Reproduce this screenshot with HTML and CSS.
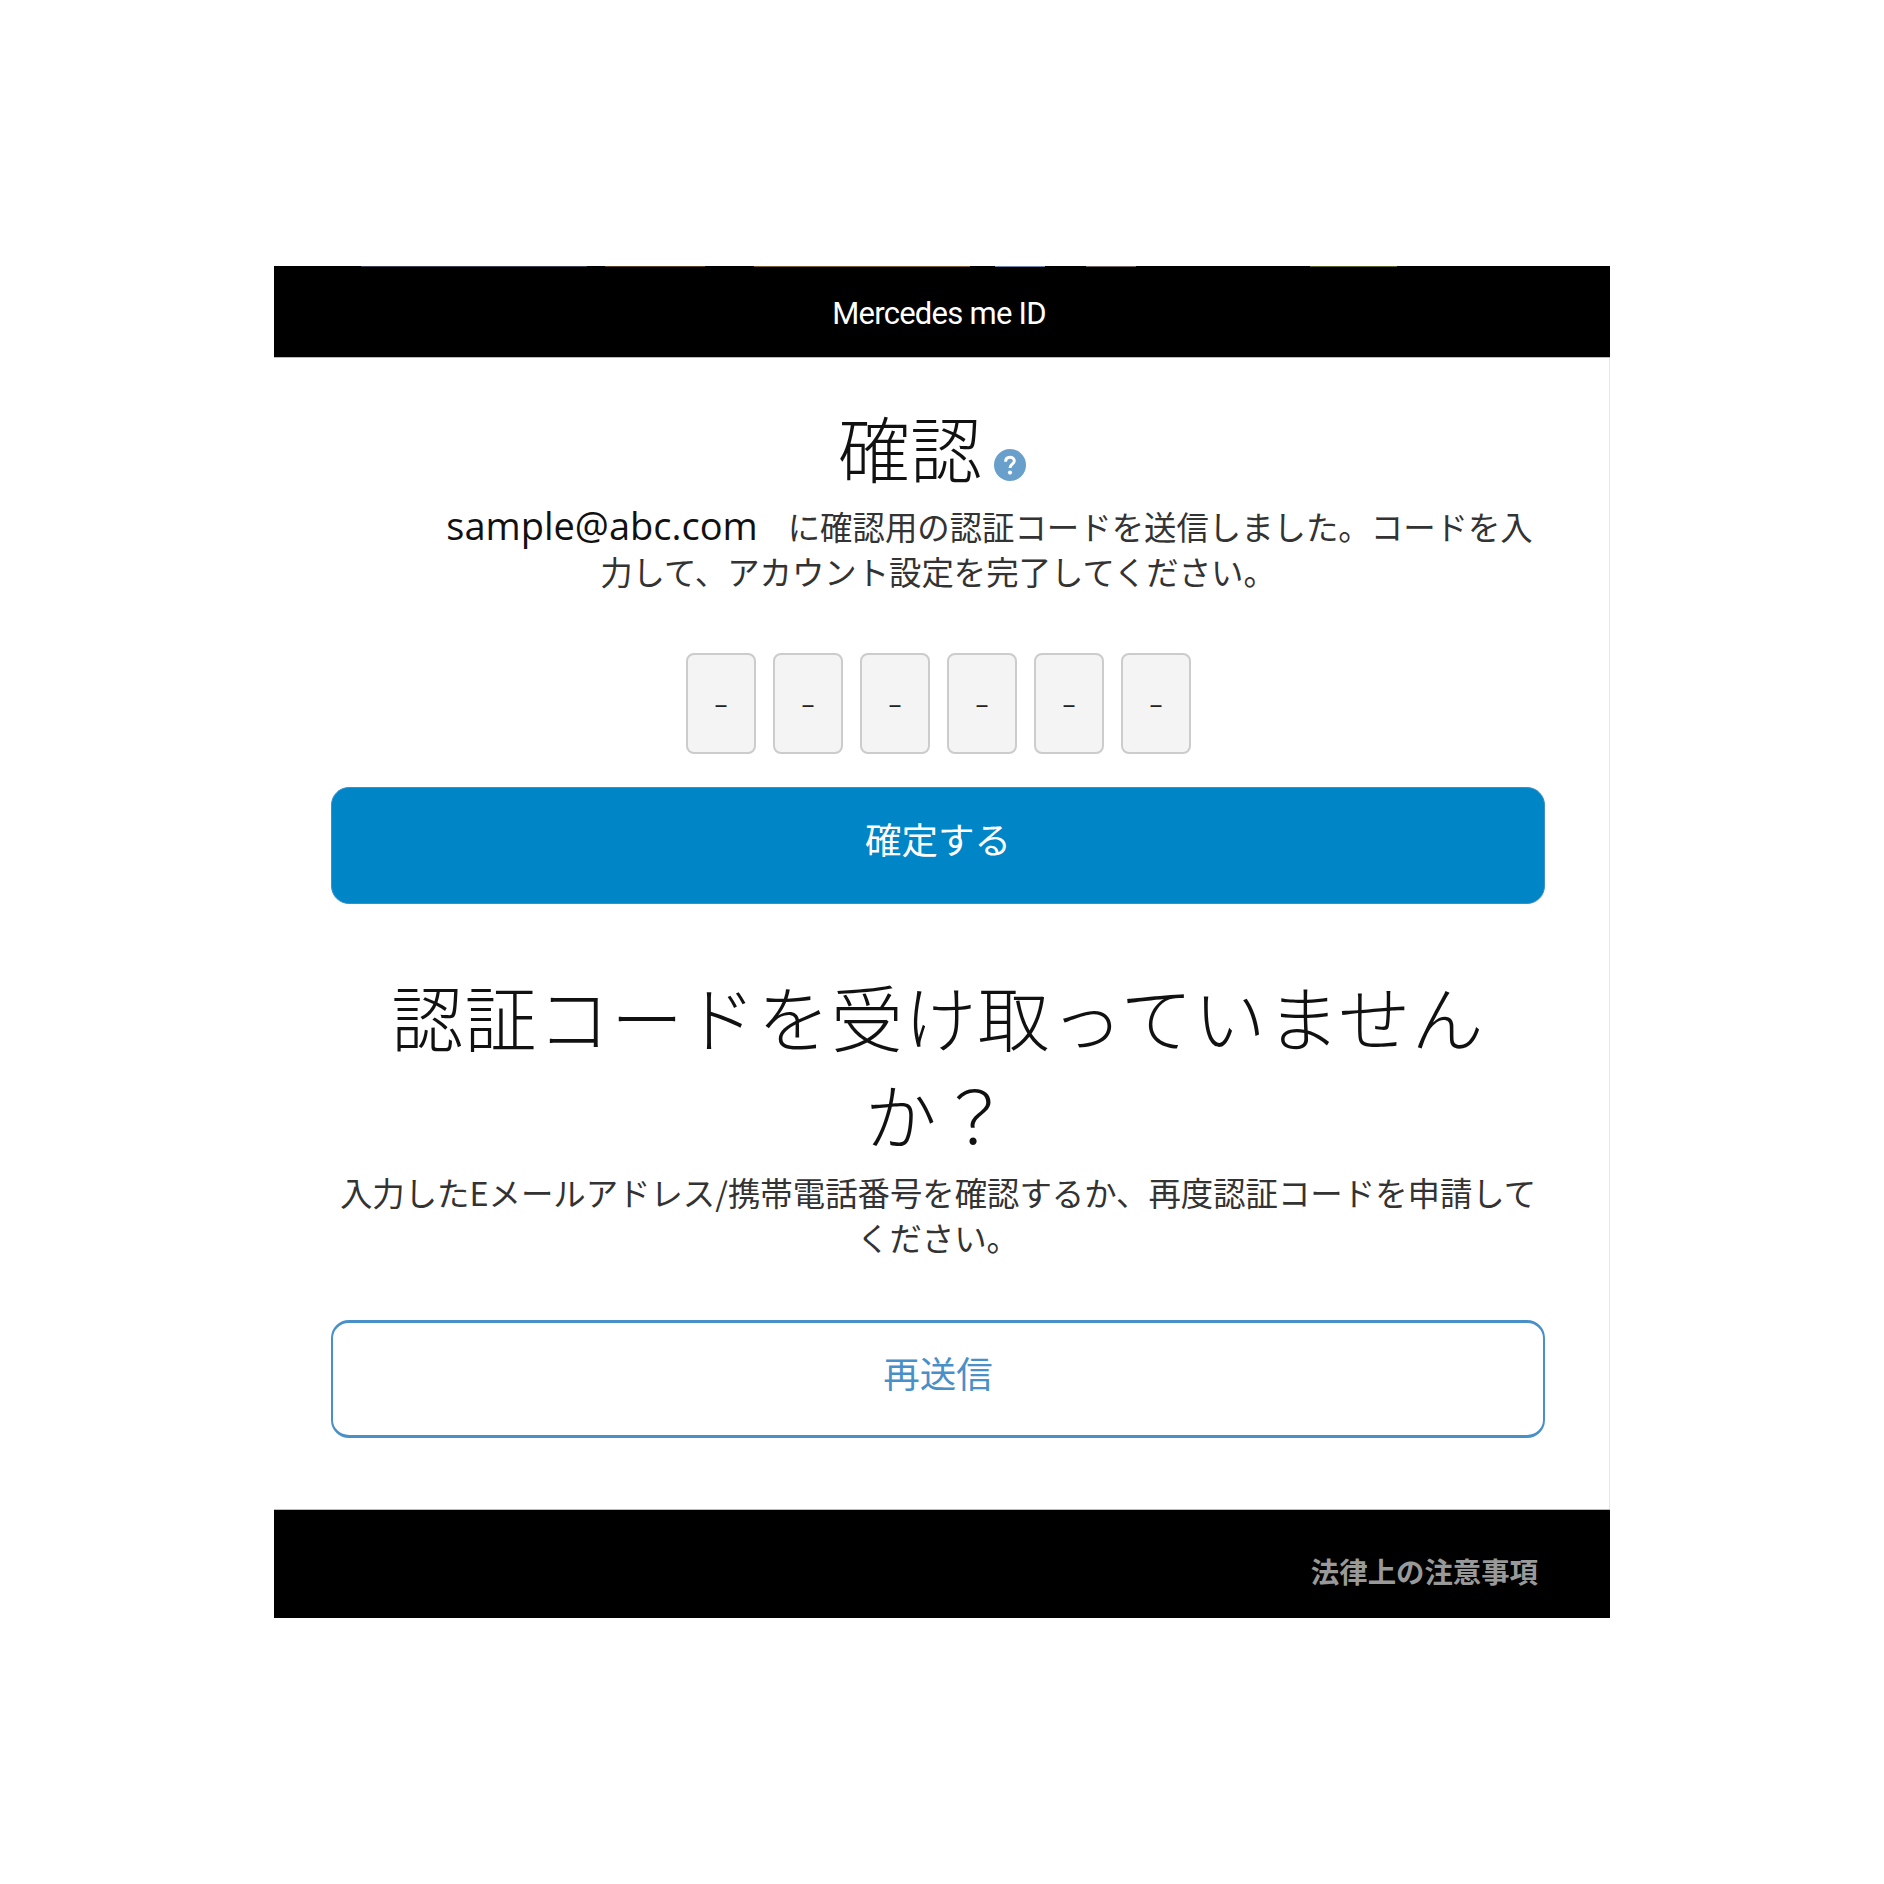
FILE: index.html
```html
<!DOCTYPE html>
<html lang="ja">
<head>
  <meta charset="UTF-8">
  <meta name="viewport" content="width=device-width, initial-scale=1.0">
  <title>Mercedes me ID</title>
  <link rel="stylesheet" href="styles.css">
</head>
<body>

<div class="page">
  <header class="top-bar">Mercedes me ID</header>

  <main class="content">
    <h1 class="title">確認<svg class="help-icon" viewBox="0 0 32 32" aria-hidden="true"><circle cx="16" cy="16" r="16" fill="#689fcb"/><path d="M11.6 12.8C11.6 10 13.4 8.3 16 8.3C18.6 8.3 20.3 9.9 20.3 12C20.3 15.2 16 15.2 16 19" fill="none" stroke="#fff" stroke-width="3"/><circle cx="16" cy="23.6" r="2.1" fill="#fff"/></svg></h1>
    <p class="message">
      <span class="line line-shift"><span class="email">sample@abc.com</span>に確認用の認証コードを送信しました。コードを入</span>
      <span class="line">力して、アカウント設定を完了してください。</span>
    </p>

    <div class="code-row">
      <div class="code-box">–</div>
      <div class="code-box">–</div>
      <div class="code-box">–</div>
      <div class="code-box">–</div>
      <div class="code-box">–</div>
      <div class="code-box">–</div>
    </div>

    <button type="button" class="btn btn-primary">確定する</button>

    <h2 class="title title-second">認証コードを受け取っていません<br>か？</h2>
    <p class="message">
      <span class="line">入力したEメールアドレス/携帯電話番号を確認するか、再度認証コードを申請して</span>
      <span class="line">ください。</span>
    </p>

    <button type="button" class="btn btn-outline">再送信</button>
  </main>

  <footer class="bottom-bar"><a href="#" class="legal-link">法律上の注意事項</a></footer>
</div>

</body>
</html>
```

FILE: styles.css
```css
body {
  margin: 0;
  background-color: #fff;
  font-family: "Noto Sans CJK JP", sans-serif;
}
.page {
  width: 1336px;
  margin: 266px 0 0 274px;
}
.top-bar {
  height: 91px;
  padding-right: 6px;
  background: linear-gradient(90deg, #000 87px, #3a4050 87px, #3a4050 313px, #000 313px, #000 331px, #5a3e26 331px, #5a3e26 431px, #000 431px, #000 480px, #7a5a30 480px, #7a5a30 696px, #000 696px, #000 721px, #6a85a5 721px, #6a85a5 771px, #000 771px, #000 812px, #6f6560 812px, #6f6560 862px, #000 862px, #000 1036px, #5a6020 1036px, #5a6020 1123px, #000 1123px) top / 100% 1px no-repeat, #000;
  border-bottom: 1px solid #bbb;
  color: #fff;
  font-family: Roboto, "Liberation Sans", sans-serif;
  font-size: 31px;
  letter-spacing: -0.75px;
  line-height: 95px;
  text-align: center;
}
.content {
  height: 1151px;
  box-sizing: border-box;
  padding: 39px 64px 0 57px;
  border-right: 1px solid #e6e6e6;
}
.title {
  margin: 0 0 9px;
  font-family: "Noto Sans CJK JP", serif;
  font-size: 72px;
  font-weight: 300;
  line-height: 97px;
  text-align: center;
  color: #111;
}
.title-second {
  margin: 62px 0 8px;
  letter-spacing: 1.3px;
  line-height: 98px;
}
.help-icon {
  width: 32px;
  height: 32px;
  margin: 0 12px;
  vertical-align: -4px;
}
.message {
  margin: 0;
  font-size: 32.4px;
  line-height: 44.5px;
  text-align: center;
  color: #333;
}
.line {
  display: block;
  white-space: nowrap;
}
.line-shift {
  margin-left: 103px;
}
.email {
  margin-right: 30px;
  font-family: "Open Sans", sans-serif;
  font-size: 38px;
  color: #111;
}
.code-row {
  display: flex;
  justify-content: center;
  gap: 17px;
  margin: 60px 0 33px;
  padding-left: 1px;
}
.code-box {
  width: 70px;
  height: 101px;
  box-sizing: border-box;
  border: 2px solid #ccc;
  border-radius: 8px;
  background-color: #f4f4f4;
  font-family: "Open Sans", sans-serif;
  font-size: 26px;
  line-height: 96px;
  text-align: center;
  color: #222;
}
.btn {
  display: block;
  width: 100%;
  height: 117px;
  padding: 0 0 14px;
  border-radius: 18px;
  font-family: "Noto Sans CJK JP", sans-serif;
  font-size: 36.5px;
  cursor: pointer;
}
.btn-primary {
  background-color: #0085c7;
  border: 1px solid #3e8fc9;
  color: #fff;
}
.btn-outline {
  height: 118px;
  margin-top: 61px;
  background-color: #fff;
  border-style: solid;
  border-color: #4a90c8;
  border-width: 3px 2px;
  color: #4a90c8;
}
.bottom-bar {
  height: 109px;
  box-sizing: border-box;
  background-color: #000;
  border-top: 1px solid #bbb;
  padding: 37px 72px 0 0;
  text-align: right;
}
.legal-link {
  font-size: 28.4px;
  font-weight: 700;
  line-height: 48px;
  color: #999;
  text-decoration: none;
}
```
